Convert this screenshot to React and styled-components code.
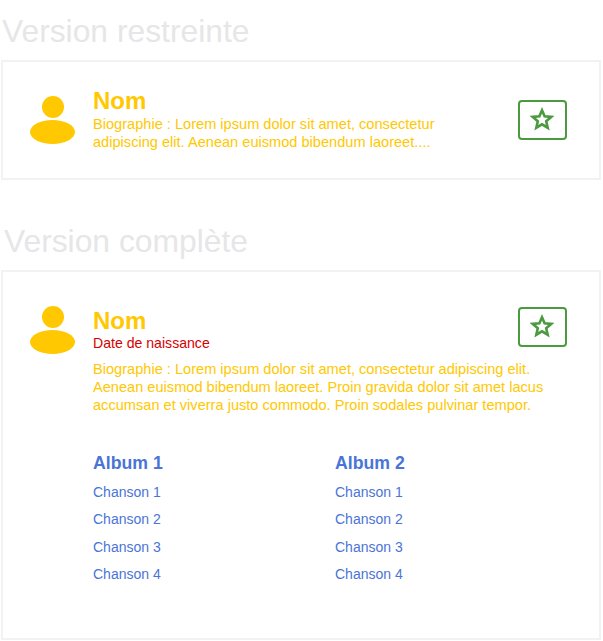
import React from "react";
import styled, { createGlobalStyle } from "styled-components";

const Global = createGlobalStyle`
  html, body { margin: 0; padding: 0; background: #fff; }
  body { font-family: "Liberation Sans", Arial, sans-serif; }
`;

const Page = styled.div`
  width: 603px;
  height: 641px;
  overflow: hidden;
  padding: 12px 2px 0 1px;
  box-sizing: border-box;
`;

const Heading = styled.h2`
  margin: 0 0 10px ${p => p.$indent}px;
  height: 38px;
  font-size: 31.8px;
  line-height: 38px;
  font-weight: 400;
  color: #e6e6e8;
`;

const Card = styled.div`
  box-sizing: border-box;
  border: 2px solid #f2f2f2;
  height: ${p => p.$height}px;
  margin-bottom: ${p => p.$gap || 0}px;
  padding: ${p => p.$top}px 32px 0 27px;
`;

const Row = styled.div`
  display: flex;
  align-items: flex-start;
`;

const Avatar = styled.svg`
  width: 46px;
  height: 48px;
  flex: none;
  margin-top: ${p => p.$top}px;
`;

const Main = styled.div`
  flex: 1;
  min-width: 0;
  margin-left: 17px;
  padding-top: ${p => p.$top}px;
`;

const Name = styled.div`
  font-size: 24px;
  line-height: 28px;
  font-weight: 700;
  color: #ffc800;
`;

const Birth = styled.div`
  font-size: 14.1px;
  line-height: 18px;
  color: #d60000;
  margin-top: -1px;
`;

const Bio = styled.p`
  margin: ${p => p.$top}px 0 0;
  width: ${p => p.$width}px;
  font-size: 14.6px;
  line-height: 18px;
  color: #ffc800;
`;

const StarButton = styled.div`
  box-sizing: border-box;
  width: 49px;
  height: 40px;
  flex: none;
  margin-top: ${p => p.$top}px;
  border: 2px solid #4b9a3f;
  border-radius: 4px;
  display: flex;
  align-items: center;
  justify-content: center;
`;

const StarIcon = styled.svg`
  width: 24px;
  height: 24px;
  margin: 0 1px 3px 0;
`;

const Albums = styled.div`
  display: grid;
  grid-template-columns: 242px 242px;
  margin-top: 39px;
`;

const AlbumTitle = styled.div`
  font-size: 17.7px;
  line-height: 20px;
  font-weight: 700;
  color: #4a74d8;
  margin-bottom: 6px;
`;

const Song = styled.div`
  font-size: 14px;
  line-height: 27.4px;
  color: #4a74d8;
`;

const Person = ({ top }) => (
  <Avatar $top={top} viewBox="0 0 46 48">
    <circle cx="23" cy="11" r="11" fill="#ffc800" />
    <ellipse cx="22.5" cy="36" rx="22.5" ry="12" fill="#ffc800" />
  </Avatar>
);

const Star = () => (
  <StarIcon viewBox="0 0 24 24">
    <path
      d="M12 3.3l2.6 6 6.6.6-5 4.4 1.5 6.4-5.7-3.4-5.7 3.4 1.5-6.4-5-4.4 6.6-.6z"
      fill="none"
      stroke="#4b9a3f"
      strokeWidth="2.6"
    />
  </StarIcon>
);

const Album = ({ title }) => (
  <div>
    <AlbumTitle>{title}</AlbumTitle>
    {["Chanson 1", "Chanson 2", "Chanson 3", "Chanson 4"].map(s => (
      <Song key={s}>{s}</Song>
    ))}
  </div>
);

export default function App() {
  return (
    <Page>
      <Global />
      <Heading $indent={1}>Version restreinte</Heading>
      <Card $height={120} $gap={42} $top={25}>
        <Row>
          <Person top={9} />
          <Main $top={0}>
            <Name>Nom</Name>
            <Bio $top={0} $width={370}>
              Biographie : Lorem ipsum dolor sit amet, consectetur adipiscing elit. Aenean euismod bibendum laoreet....
            </Bio>
          </Main>
          <StarButton $top={13}><Star /></StarButton>
        </Row>
      </Card>
      <Heading $indent={3}>Version complète</Heading>
      <Card $height={370} $top={34}>
        <Row>
          <Person top={0} />
          <Main $top={1}>
            <Name>Nom</Name>
            <Birth>Date de naissance</Birth>
            <Bio $top={8} $width={460}>
              Biographie : Lorem ipsum dolor sit amet, consectetur adipiscing elit. Aenean euismod bibendum laoreet. Proin gravida dolor sit amet lacus accumsan et viverra justo commodo. Proin sodales pulvinar tempor.
            </Bio>
            <Albums>
              <Album title="Album 1" />
              <Album title="Album 2" />
            </Albums>
          </Main>
          <StarButton $top={1}><Star /></StarButton>
        </Row>
      </Card>
    </Page>
  );
}
